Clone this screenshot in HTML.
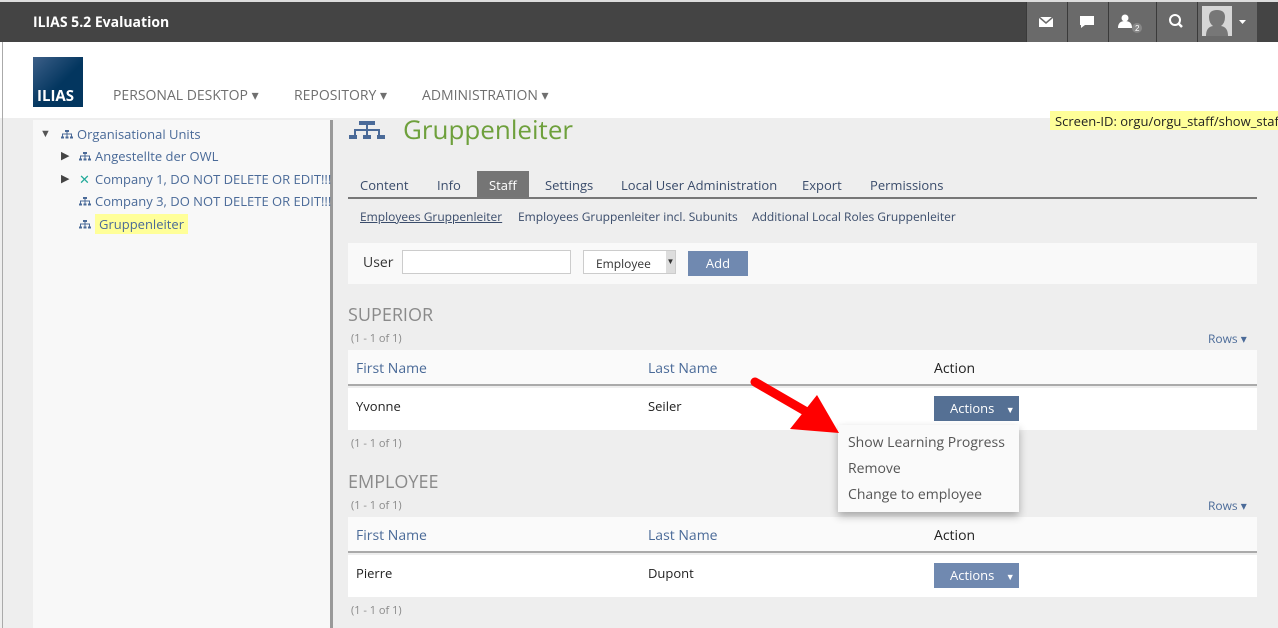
<!DOCTYPE html>
<html><head><meta charset="utf-8"><style>
*{box-sizing:border-box;margin:0;padding:0}
body{width:1278px;height:628px;overflow:hidden;background:#eee;font-family:"Open Sans","Liberation Sans",sans-serif;position:relative;font-size:13px;color:#333}
.a{position:absolute;white-space:nowrap}
.hb{position:absolute;top:2px;height:40px;background:#6a6a6a;border-left:1px solid #3a3a3a}
.tab{position:absolute;top:176px;color:#3a4c6b;font-size:13px}
.th{color:#4a6a98;font-size:14px}
.ti{display:inline-block;width:12px;height:9px;margin-right:4px;vertical-align:0}
.cnt{font-size:11px;color:#8a8a8a}
</style></head><body>
<svg width="0" height="0" style="position:absolute"><defs><g id="oi" fill="#4a6a98"><rect x="4" y="0" width="4" height="2"/><rect x="5.5" y="2" width="1" height="2"/><rect x="1" y="3.5" width="10" height="1"/><rect x="1" y="3.5" width="1" height="3"/><rect x="10" y="3.5" width="1" height="3"/><rect x="5.5" y="3.5" width="1" height="3"/><rect x="0" y="6.5" width="3" height="2"/><rect x="4.5" y="6.5" width="3" height="2"/><rect x="9" y="6.5" width="3" height="2"/></g></defs></svg>
<div class="a" style="left:0;top:0;width:1278px;height:2px;background:#ddd"></div>
<div class="a" style="left:0;top:2px;width:1278px;height:40px;background:#444"></div>
<div class="a" style="left:33px;top:13px;color:#fff;font-weight:bold;font-size:14px">ILIAS 5.2 Evaluation</div>
<div class="hb" style="left:1026px;width:41px"></div>
<div class="hb" style="left:1067px;width:41px"></div>
<div class="hb" style="left:1108px;width:48px"></div>
<div class="hb" style="left:1156px;width:41px"></div>
<div class="hb" style="left:1197px;width:60px"></div>
<svg class="a" style="left:0;top:0" width="1278" height="42">
<g fill="#fff"><rect x="1039" y="17" width="14" height="10"/><path d="M1039 17l7 6 7-6" stroke="#6a6a6a" stroke-width="1.5" fill="none"/>
<path d="M1080 16h14v9h-9l-4 3v-3h-1z"/>
<circle cx="1125" cy="18" r="3.5"/><path d="M1118 28q0-7 7-7t7 7z"/>
<circle cx="1137" cy="28" r="5" fill="#888"/>
<circle cx="1175" cy="20" r="5" fill="none" stroke="#fff" stroke-width="2"/><path d="M1178 23l4 4" stroke="#fff" stroke-width="2.5"/>
<path d="M1239 20h7l-3.5 4z"/></g>
<text x="1135" y="31" font-size="8" fill="#fff" font-family="Liberation Sans">2</text>
<rect x="1202" y="6" width="30" height="30" fill="#d6d6d6"/>
<path d="M1206 36q0-9 7-10q-4-3-4-9q0-7 8-7t8 7q0 6-4 9q7 1 7 10z" fill="#777"/>
</svg>
<div class="a" style="left:0;top:42px;width:1278px;height:76px;background:#fff"></div>
<div class="a" style="left:2px;top:42px;width:1px;height:586px;background:#aaa"></div>
<div class="a" style="left:33px;top:57px;width:50px;height:50px;background:linear-gradient(135deg,#3c5f88,#03365f 55%)"></div>
<div class="a" style="left:37px;top:86px;color:#fff;font-weight:bold;font-size:15px">ILIAS</div>
<div class="a" style="left:113px;top:86px;color:#6f6f6f;font-size:14px">PERSONAL DESKTOP ▾</div>
<div class="a" style="left:294px;top:86px;color:#6f6f6f;font-size:14px">REPOSITORY ▾</div>
<div class="a" style="left:422px;top:86px;color:#6f6f6f;font-size:14px">ADMINISTRATION ▾</div>
<div class="a" style="left:1050px;top:111px;width:240px;height:19px;background:#ffff99;font-size:13px;padding:1px 5px;color:#222">Screen-ID: orgu/orgu_staff/show_staf</div>
<div class="a" style="left:33px;top:120px;width:297px;height:508px;background:#f8f8f8"></div>
<div class="a" style="left:330px;top:120px;width:3px;height:508px;background:#999"></div>
<div class="a" style="left:40px;top:126px;color:#555;font-size:11px">▼</div>
<div class="a" style="left:61px;top:125px;color:#4a6a98;font-size:13px"><svg class="ti"><use href="#oi"/></svg>Organisational Units</div>
<div class="a" style="left:61px;top:148px;color:#444;font-size:11px">▶</div>
<div class="a" style="left:79px;top:147px;color:#4a6a98;font-size:13px"><svg class="ti"><use href="#oi"/></svg>Angestellte der OWL</div>
<div class="a" style="left:61px;top:171px;color:#444;font-size:11px">▶</div>
<div class="a" style="left:79px;top:170px;color:#4a6a98;font-size:13px"><span style="color:#2a9;display:inline-block;width:16px">✕</span>Company 1, DO NOT DELETE OR EDIT!!!</div>
<div class="a" style="left:79px;top:192px;color:#4a6a98;font-size:13px"><svg class="ti"><use href="#oi"/></svg>Company 3, DO NOT DELETE OR EDIT!!!</div>
<div class="a" style="left:79px;top:215px;color:#4a6a98;font-size:13px"><svg class="ti"><use href="#oi"/></svg><span style="background:#ffff99;padding:1px 4px">Gruppenleiter</span></div>
<svg class="a" style="left:349px;top:119px" width="40" height="24"><g fill="#4a6a98"><rect x="10" y="2" width="16" height="4"/><rect x="17" y="6" width="2" height="5"/><rect x="5" y="10" width="26" height="2"/><rect x="5" y="10" width="2" height="6"/><rect x="17" y="10" width="2" height="6"/><rect x="29" y="10" width="2" height="6"/><rect x="0" y="16" width="8" height="4"/><rect x="14" y="16" width="8" height="4"/><rect x="28" y="16" width="8" height="4"/></g></svg>
<div class="a" style="left:403px;top:111px;color:#6ea03c;font-size:26px">Gruppenleiter</div>
<div class="a" style="left:477px;top:171px;width:52px;height:28px;background:#757575"></div>
<div class="tab" style="left:360px">Content</div>
<div class="tab" style="left:437px">Info</div>
<div class="tab" style="left:489px;color:#fff">Staff</div>
<div class="tab" style="left:545px">Settings</div>
<div class="tab" style="left:621px">Local User Administration</div>
<div class="tab" style="left:802px">Export</div>
<div class="tab" style="left:870px">Permissions</div>
<div class="a" style="left:348px;top:197px;width:909px;height:2px;background:#777"></div>
<div class="a" style="left:360px;top:208px;color:#3a4c6b;font-size:12px;text-decoration:underline">Employees Gruppenleiter</div>
<div class="a" style="left:518px;top:208px;color:#3a4c6b;font-size:12px">Employees Gruppenleiter incl. Subunits</div>
<div class="a" style="left:752px;top:208px;color:#3a4c6b;font-size:12px">Additional Local Roles Gruppenleiter</div>
<div class="a" style="left:348px;top:243px;width:909px;height:41px;background:#f9f9f9"></div>
<div class="a" style="left:363px;top:253px;font-size:14px;color:#333">User</div>
<div class="a" style="left:402px;top:250px;width:169px;height:24px;background:#fff;border:1px solid #ccc"></div>
<div class="a" style="left:583px;top:250px;width:93px;height:24px;background:#fff;border:1px solid #ccc;font-size:12px;padding:4px 12px">Employee<span style="position:absolute;right:0;top:0;width:9px;height:22px;background:#ddd;font-size:8px;line-height:22px;text-align:center">▼</span></div>
<div class="a" style="left:688px;top:251px;width:60px;height:25px;background:#7089b0;color:#fff;font-size:13px;text-align:center;line-height:25px">Add</div>

<div class="a" style="left:348px;top:303px;font-size:18px;color:#8a8a8a">SUPERIOR</div>
<div class="a cnt" style="left:351px;top:331px">(1 - 1 of 1)</div>
<div class="a" style="left:1208px;top:330px;font-size:12px;color:#4a6a98">Rows ▾</div>
<div class="a" style="left:348px;top:350px;width:909px;height:36px;background:#fafafa;border-bottom:2px solid #aaa"></div>
<div class="a th" style="left:356px;top:359px">First Name</div>
<div class="a th" style="left:648px;top:359px">Last Name</div>
<div class="a" style="left:934px;top:359px;font-size:14px;color:#222">Action</div>
<div class="a" style="left:348px;top:388px;width:909px;height:42px;background:#fff"></div>
<div class="a" style="left:356px;top:397px;color:#222">Yvonne</div>
<div class="a" style="left:648px;top:397px;color:#222">Seiler</div>
<div class="a" style="left:934px;top:396px;width:85px;height:25px;background:#557094;color:#fff;line-height:25px;padding-left:16px">Actions <span style="font-size:9px;margin-left:8px">▼</span></div>
<div class="a cnt" style="left:351px;top:436px">(1 - 1 of 1)</div>

<div class="a" style="left:348px;top:470px;font-size:18px;color:#8a8a8a">EMPLOYEE</div>
<div class="a cnt" style="left:351px;top:498px">(1 - 1 of 1)</div>
<div class="a" style="left:1208px;top:497px;font-size:12px;color:#4a6a98">Rows ▾</div>
<div class="a" style="left:348px;top:517px;width:909px;height:36px;background:#fafafa;border-bottom:2px solid #aaa"></div>
<div class="a th" style="left:356px;top:526px">First Name</div>
<div class="a th" style="left:648px;top:526px">Last Name</div>
<div class="a" style="left:934px;top:526px;font-size:14px;color:#222">Action</div>
<div class="a" style="left:348px;top:555px;width:909px;height:42px;background:#fff"></div>
<div class="a" style="left:356px;top:564px;color:#222">Pierre</div>
<div class="a" style="left:648px;top:564px;color:#222">Dupont</div>
<div class="a" style="left:934px;top:563px;width:85px;height:25px;background:#7089b0;color:#fff;line-height:25px;padding-left:16px">Actions <span style="font-size:9px;margin-left:8px">▼</span></div>
<div class="a cnt" style="left:351px;top:603px">(1 - 1 of 1)</div>

<div class="a" style="left:838px;top:425px;width:181px;height:87px;background:#fafafa;box-shadow:0 4px 8px rgba(0,0,0,.3);font-size:14px;color:#555">
<div class="a" style="left:10px;top:8px">Show Learning Progress</div>
<div class="a" style="left:10px;top:34px">Remove</div>
<div class="a" style="left:10px;top:60px">Change to employee</div></div>
<svg class="a" style="left:740px;top:370px" width="110" height="70"><path d="M15 12L72 45" stroke="#f00" stroke-width="9" stroke-linecap="round"/><path d="M50 59L99 63L77 25Z" fill="#f00"/></svg>
</body></html>
